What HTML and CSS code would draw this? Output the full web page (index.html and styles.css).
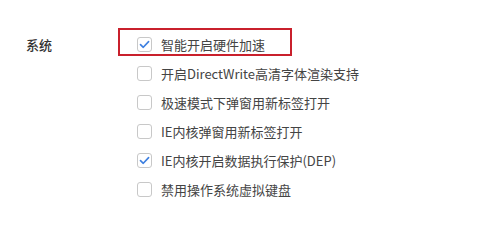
FILE: index.html
```html
<!DOCTYPE html>
<html lang="zh-CN">
<head>
<meta charset="utf-8">
<link rel="stylesheet" href="styles.css">
</head>
<body>
<div class="section">
  <div class="label">系统</div>
  <div class="options">
    <label class="opt highlighted"><span class="box checked"><svg viewBox="0 0 15 15" width="15" height="15"><path d="M3.5 7.6 L6.3 10.3 L11.6 4.6" fill="none" stroke="#3d7fe0" stroke-width="1.6" stroke-linecap="round" stroke-linejoin="round"/></svg></span><span class="txt">智能开启硬件加速</span></label>
    <label class="opt"><span class="box"></span><span class="txt">开启DirectWrite高清字体渲染支持</span></label>
    <label class="opt"><span class="box"></span><span class="txt">极速模式下弹窗用新标签打开</span></label>
    <label class="opt"><span class="box"></span><span class="txt">IE内核弹窗用新标签打开</span></label>
    <label class="opt"><span class="box checked"><svg viewBox="0 0 15 15" width="15" height="15"><path d="M3.5 7.6 L6.3 10.3 L11.6 4.6" fill="none" stroke="#3d7fe0" stroke-width="1.6" stroke-linecap="round" stroke-linejoin="round"/></svg></span><span class="txt">IE内核开启数据执行保护(DEP)</span></label>
    <label class="opt"><span class="box"></span><span class="txt">禁用操作系统虚拟键盘</span></label>
  </div>
</div>
</body>
</html>
```

FILE: styles.css
```css
html, body {
  margin: 0;
  padding: 0;
  background: #ffffff;
}
body {
  font-family: "Noto Sans CJK SC", "Noto Sans", sans-serif;
  font-size: 13px;
  color: #333333;
}
.section {
  display: flex;
  padding-top: 30px;
  padding-left: 26px;
}
.label {
  width: 111px;
  height: 29px;
  line-height: 29px;
  color: #333333;
  font-weight: 500;
}
.options {
  display: flex;
  flex-direction: column;
}
.opt {
  position: relative;
  display: flex;
  align-items: center;
  height: 29px;
  gap: 9px;
}
.highlighted::after {
  content: "";
  position: absolute;
  left: -19px;
  top: -2px;
  width: 170px;
  height: 24px;
  border: 2px solid #c9202c;
}
.box {
  box-sizing: border-box;
  width: 15px;
  height: 15px;
  border: 1px solid #c8c8c8;
  border-radius: 3px;
  background: #fff;
  display: flex;
}
.box svg {
  margin: -1px;
}
.txt {
  line-height: 29px;
  color: #444444;
  white-space: nowrap;
}
```
